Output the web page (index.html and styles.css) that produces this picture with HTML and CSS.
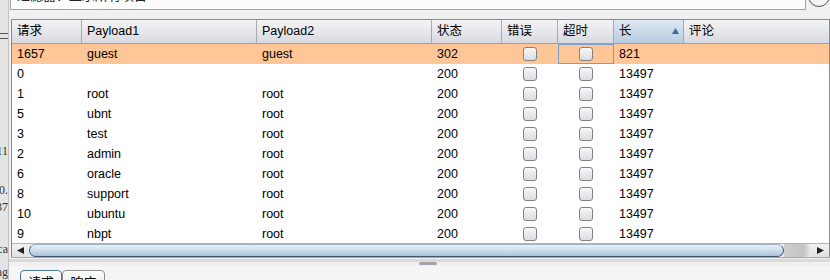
FILE: index.html
```html
<!DOCTYPE html>
<html lang="zh">
<head>
<meta charset="utf-8">
<title>Intruder results</title>
<link rel="stylesheet" href="styles.css">
</head>
<body>
<div class="app">
  <div class="side">
    <div class="sgrip"></div>
    <div class="stxt t1"><span>11</span></div>
    <div class="stxt t2"><span>10.</span></div>
    <div class="stxt t3"><span>37</span></div>
    <div class="stxt t4"><span>ca</span></div>
    <div class="stxt t5"><span>ng</span></div>
  </div>
  <div class="main">
    <div class="topbar">
      <div class="filter">过滤器：显示所有项目</div>
      <div class="roundbtn"></div>
    </div>
    <div class="table">
      <div class="thead cols">
        <div class="th">请求</div>
        <div class="th">Payload1</div>
        <div class="th">Payload2</div>
        <div class="th">状态</div>
        <div class="th">错误</div>
        <div class="th">超时</div>
        <div class="th sorted"><span>长</span><svg class="arrow" width="7" height="6" viewBox="0 0 7 6"><path d="M3.5 0 L7 6 L0 6 Z" fill="#3d6c9c"/></svg></div>
        <div class="th last">评论</div>
      </div>
      <div class="tbody">
        <div class="tr cols hl"><div class="td">1657</div><div class="td">guest</div><div class="td">guest</div><div class="td">302</div><div class="td cb"><span class="box"></span></div><div class="td cb focus"><span class="box"></span></div><div class="td">821</div><div class="td"></div></div>
        <div class="tr cols"><div class="td">0</div><div class="td"></div><div class="td"></div><div class="td">200</div><div class="td cb"><span class="box"></span></div><div class="td cb"><span class="box"></span></div><div class="td">13497</div><div class="td"></div></div>
        <div class="tr cols"><div class="td">1</div><div class="td">root</div><div class="td">root</div><div class="td">200</div><div class="td cb"><span class="box"></span></div><div class="td cb"><span class="box"></span></div><div class="td">13497</div><div class="td"></div></div>
        <div class="tr cols"><div class="td">5</div><div class="td">ubnt</div><div class="td">root</div><div class="td">200</div><div class="td cb"><span class="box"></span></div><div class="td cb"><span class="box"></span></div><div class="td">13497</div><div class="td"></div></div>
        <div class="tr cols"><div class="td">3</div><div class="td">test</div><div class="td">root</div><div class="td">200</div><div class="td cb"><span class="box"></span></div><div class="td cb"><span class="box"></span></div><div class="td">13497</div><div class="td"></div></div>
        <div class="tr cols"><div class="td">2</div><div class="td">admin</div><div class="td">root</div><div class="td">200</div><div class="td cb"><span class="box"></span></div><div class="td cb"><span class="box"></span></div><div class="td">13497</div><div class="td"></div></div>
        <div class="tr cols"><div class="td">6</div><div class="td">oracle</div><div class="td">root</div><div class="td">200</div><div class="td cb"><span class="box"></span></div><div class="td cb"><span class="box"></span></div><div class="td">13497</div><div class="td"></div></div>
        <div class="tr cols"><div class="td">8</div><div class="td">support</div><div class="td">root</div><div class="td">200</div><div class="td cb"><span class="box"></span></div><div class="td cb"><span class="box"></span></div><div class="td">13497</div><div class="td"></div></div>
        <div class="tr cols"><div class="td">10</div><div class="td">ubuntu</div><div class="td">root</div><div class="td">200</div><div class="td cb"><span class="box"></span></div><div class="td cb"><span class="box"></span></div><div class="td">13497</div><div class="td"></div></div>
        <div class="tr cols"><div class="td">9</div><div class="td">nbpt</div><div class="td">root</div><div class="td">200</div><div class="td cb"><span class="box"></span></div><div class="td cb"><span class="box"></span></div><div class="td">13497</div><div class="td"></div></div>
      </div>
      <div class="hscroll">
        <div class="sbtn"><svg width="7" height="7" viewBox="0 0 7 7"><path d="M0 3.5 L7 0 L7 7 Z" fill="#222"/></svg></div>
        <div class="thumb"></div>
        <div class="track"></div>
        <div class="sbtn right"><svg width="7" height="7" viewBox="0 0 7 7"><path d="M7 3.5 L0 0 L0 7 Z" fill="#222"/></svg></div>
      </div>
    </div>
    <div class="splitter"><div class="grip"></div></div>
    <div class="bottom">
      <div class="tab active">请求</div>
      <div class="tab">响应</div>
    </div>
  </div>
</div>
</body>
</html>
```
FILE: styles.css
```css
* { box-sizing: border-box; }
html, body { margin: 0; padding: 0; }
body {
  width: 830px;
  height: 280px;
  overflow: hidden;
  background: #f0f0f0;
  font-family: "Liberation Sans", "Noto Sans CJK SC", Arial, sans-serif;
  font-size: 12.5px;
  color: #000;
}
.app { display: flex; height: 280px; }

.side {
  width: 9px;
  flex: none;
  background: #e4e4e4;
  border-right: 1px solid #c2c2c2;
  overflow: hidden;
  display: flex;
  flex-direction: column;
}
.sgrip {
  margin-top: 33px;
  width: 8px;
  height: 6px;
  border-top: 1px solid #555;
  border-bottom: 1px solid #555;
}
.stxt {
  display: flex;
  justify-content: flex-end;
  height: 13px;
  line-height: 13px;
  font-family: "Liberation Serif", serif;
  font-size: 12px;
  color: #333;
  white-space: nowrap;
}
.t1 { margin-top: 106px; }
.t2 { margin-top: 26px; }
.t3 { margin-top: 4px; }
.t4 { margin-top: 29px; }
.t5 { margin-top: 10px; }

.main { flex: 1; display: flex; flex-direction: column; min-width: 0; }

.topbar { height: 19px; flex: none; display: flex; align-items: flex-start; }
.filter {
  margin-left: 1px;
  width: 809px;
  height: 31px;
  margin-top: -21px;
  border: 1px solid #a3a3a3;
  background: #fcfcfc;
  padding: 7px 0 0 6px;
  font-family: "Noto Sans CJK SC", sans-serif;
  font-size: 13px;
  line-height: 15px;
  color: #222;
  overflow: hidden;
  white-space: nowrap;
}
.roundbtn {
  flex: none;
  margin-left: 2px;
  margin-top: -15px;
  width: 22px;
  height: 22px;
  border-radius: 50%;
  border: 1.5px solid #555;
  background: #f4f4f4;
}

.table {
  margin-left: 2px;
  width: 819px;
  border: 1px solid #878b93;
  border-bottom-color: #a8a8a8;
  background: #fff;
}
.cols {
  display: grid;
  grid-template-columns: 70px 175px 175px 70px 56px 56px 70px 1fr;
}
.thead {
  height: 24px;
  background: linear-gradient(#f4f4f6, #d8dae0);
  border-bottom: 1px solid #a0a0a0;
}
.th {
  padding-left: 5px;
  line-height: 23px;
  border-right: 1px solid #a6a9b0;
  white-space: nowrap;
  overflow: hidden;
}
.th.last { border-right: none; }
.th.sorted {
  display: flex;
  align-items: center;
  justify-content: space-between;
  padding-right: 4px;
  background: linear-gradient(#dde8f2, #b9cde0);
}
.arrow { display: block; margin-top: -1px; }

.tbody { height: 199px; overflow: hidden; }
.tr { height: 20px; line-height: 21px; }
.tr.hl { background: #ffc697; }
.td { padding-left: 5px; white-space: nowrap; overflow: hidden; }
.td.cb {
  padding-left: 0;
  display: flex;
  align-items: center;
  justify-content: center;
}
.td.focus { box-shadow: inset 0 0 0 1px #7aa0c9; }
.box {
  display: block;
  width: 14px;
  height: 14px;
  border: 1px solid #828282;
  border-radius: 3px;
  background: linear-gradient(#f6f6f8, #dcdde2);
}

.hscroll {
  display: flex;
  height: 14px;
  border-top: 1px solid #b4b4b4;
  background: #ececec;
}
.sbtn {
  width: 17px;
  flex: none;
  display: flex;
  align-items: center;
  justify-content: center;
  background: linear-gradient(#f2f2f2, #e0e0e0);
}
.sbtn.right { width: 18px; }
.thumb {
  width: 755px;
  flex: none;
  border: 1px solid #42566e;
  border-top-color: #9fb0c2;
  border-radius: 9px;
  background: linear-gradient(#e8f0f8 0%, #d6e4f0 35%, #bcd0e3 75%, #a9c1d9 100%);
}
.track {
  flex: 1;
  background: linear-gradient(to right, #cfcfcf, #c4c4c4 70%, #e6e6e6);
  border-radius: 0 6px 6px 0;
}

.splitter {
  height: 8px;
  flex: none;
  background: linear-gradient(#f0f0f0 0 1px, #d9dade 1px 4px, #f0f0f0 4px);
}
.grip {
  margin-left: 410px;
  margin-top: 4px;
  width: 18px;
  height: 3px;
  border-radius: 2px;
  background: #a2a3a8;
}

.bottom {
  flex: 1;
  background: #f5f5f5;
  display: flex;
  align-items: flex-start;
  padding-top: 4px;
  padding-left: 11px;
}
.tab {
  width: 42px;
  height: 22px;
  border: 1px solid #8e8e8e;
  border-radius: 4px 4px 0 0;
  text-align: center;
  padding-top: 3px;
  font-family: "Noto Sans CJK SC", sans-serif;
  font-size: 13px;
  line-height: 16px;
  background: linear-gradient(#fbfbfb, #e6e6e6);
}
.tab + .tab { width: 43px; }
.tab.active { border-color: #4f729a; }
```
